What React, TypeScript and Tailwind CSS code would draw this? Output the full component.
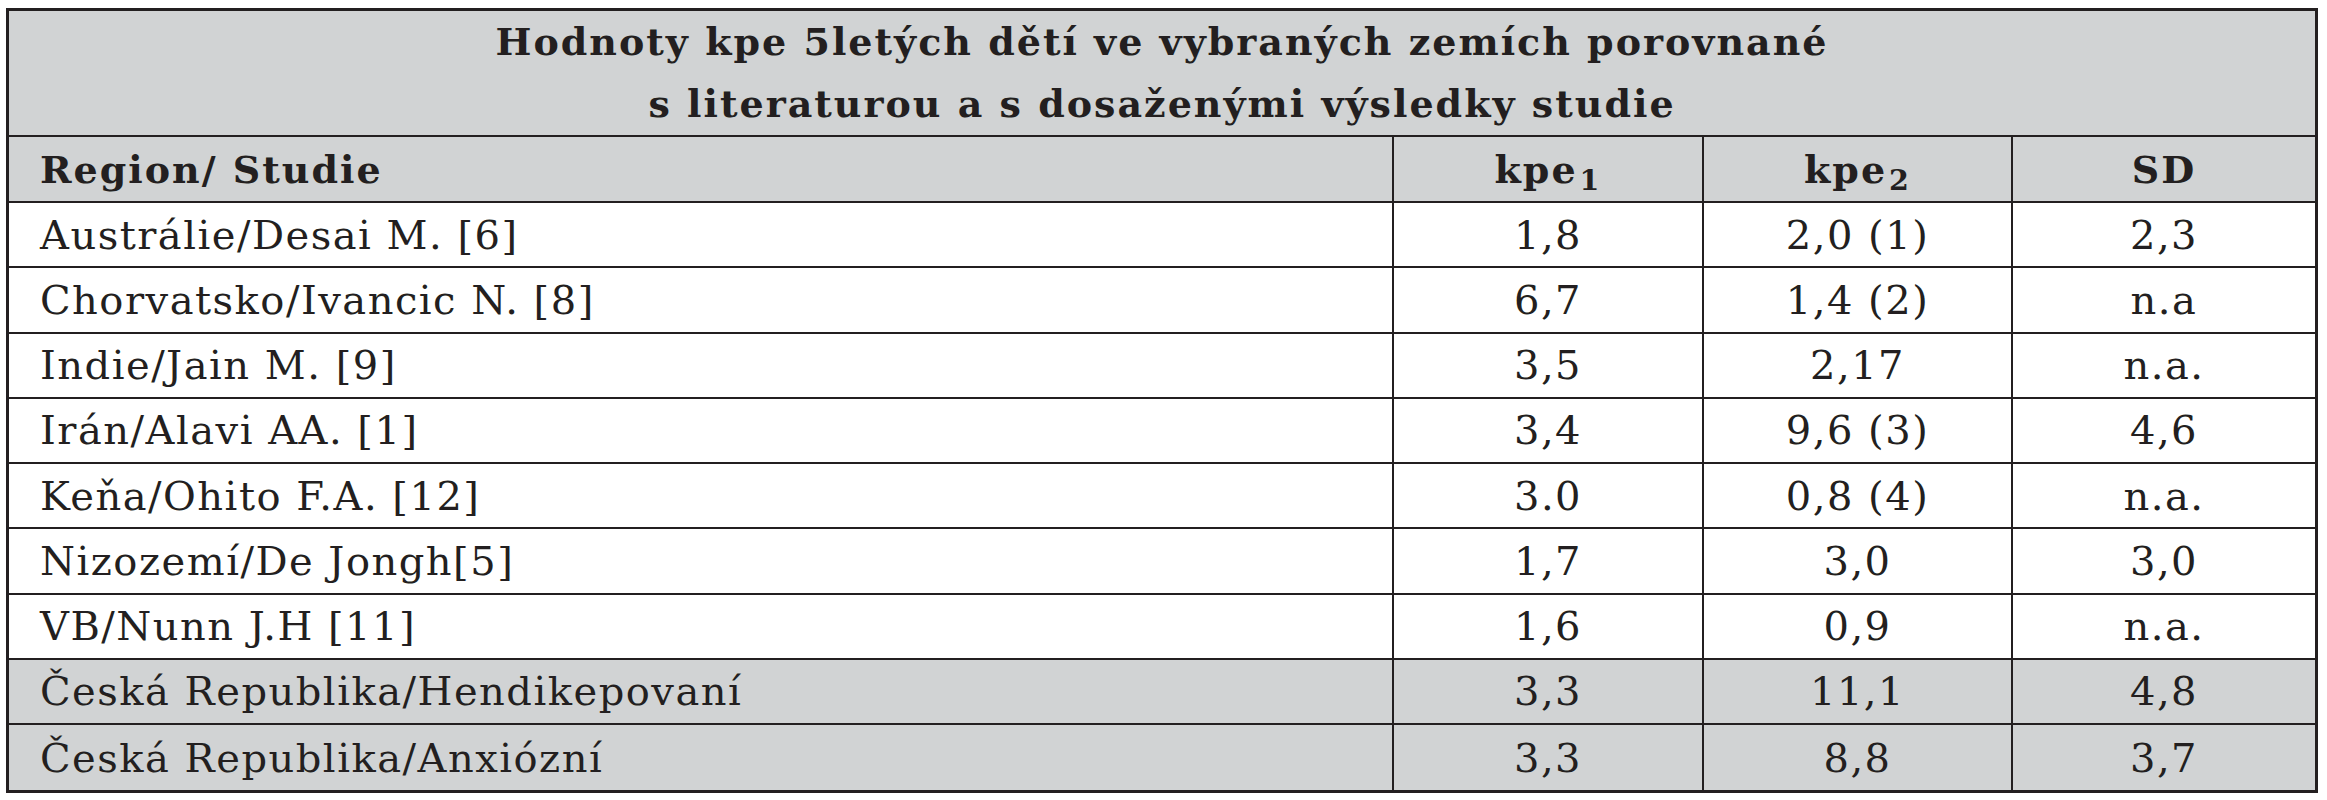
const rows = [
  { region: "Austrálie/Desai M. [6]", kpe1: "1,8", kpe2: "2,0 (1)", sd: "2,3", grey: false },
  { region: "Chorvatsko/Ivancic N. [8]", kpe1: "6,7", kpe2: "1,4 (2)", sd: "n.a", grey: false },
  { region: "Indie/Jain M. [9]", kpe1: "3,5", kpe2: "2,17", sd: "n.a.", grey: false },
  { region: "Irán/Alavi AA. [1]", kpe1: "3,4", kpe2: "9,6 (3)", sd: "4,6", grey: false },
  { region: "Keňa/Ohito F.A. [12]", kpe1: "3.0", kpe2: "0,8 (4)", sd: "n.a.", grey: false },
  { region: "Nizozemí/De Jongh[5]", kpe1: "1,7", kpe2: "3,0", sd: "3,0", grey: false },
  { region: "VB/Nunn J.H [11]", kpe1: "1,6", kpe2: "0,9", sd: "n.a.", grey: false },
  { region: "Česká Republika/Hendikepovaní", kpe1: "3,3", kpe2: "11,1", sd: "4,8", grey: true },
  { region: "Česká Republika/Anxiózní", kpe1: "3,3", kpe2: "8,8", sd: "3,7", grey: true },
];

const grid = "grid grid-cols-[1383px_310px_309px_1fr]";
const bold = "font-['DejaVu_Serif',serif] font-bold text-[38px] tracking-[2px]";
const body = "font-['DejaVu_Serif',serif] text-[40px] tracking-[1.5px]";

export default function App() {
  return (
    <div className="min-h-[800px] bg-white pt-[8px] pl-[6px] text-[#231f20]">
      <div className="w-[2312px] border-[3px] border-[#231f20]">
        <div className={`flex h-[126px] flex-col items-center justify-center border-b-2 border-[#231f20] bg-[#d1d3d4] leading-[62px] ${bold}`}>
          <p>Hodnoty kpe 5letých dětí ve vybraných zemích porovnané</p>
          <p>s literaturou a s dosaženými výsledky studie</p>
        </div>

        <div className={`${grid} h-[66px] border-b-2 border-[#231f20] bg-[#d1d3d4] ${bold}`}>
          <div className="flex items-center pl-[31px]">Region/ Studie</div>
          <div className="flex items-center justify-center border-l-2 border-[#231f20]">
            <span>
              kpe<sub className="ml-[2px]">1</sub>
            </span>
          </div>
          <div className="flex items-center justify-center border-l-2 border-[#231f20]">
            <span>
              kpe<sub className="ml-[2px]">2</sub>
            </span>
          </div>
          <div className="flex items-center justify-center border-l-2 border-[#231f20]">SD</div>
        </div>

        {rows.map((r, i) => (
          <div
            key={r.region}
            className={`${grid} h-[65.25px] ${i < rows.length - 1 ? "border-b-2 border-[#231f20]" : ""} ${
              r.grey ? "bg-[#d1d3d4]" : "bg-white"
            } ${body}`}
          >
            <div className="flex items-center pl-[31px]">{r.region}</div>
            <div className="flex items-center justify-center border-l-2 border-[#231f20]">{r.kpe1}</div>
            <div className="flex items-center justify-center border-l-2 border-[#231f20]">{r.kpe2}</div>
            <div className="flex items-center justify-center border-l-2 border-[#231f20]">{r.sd}</div>
          </div>
        ))}
      </div>
    </div>
  );
}
